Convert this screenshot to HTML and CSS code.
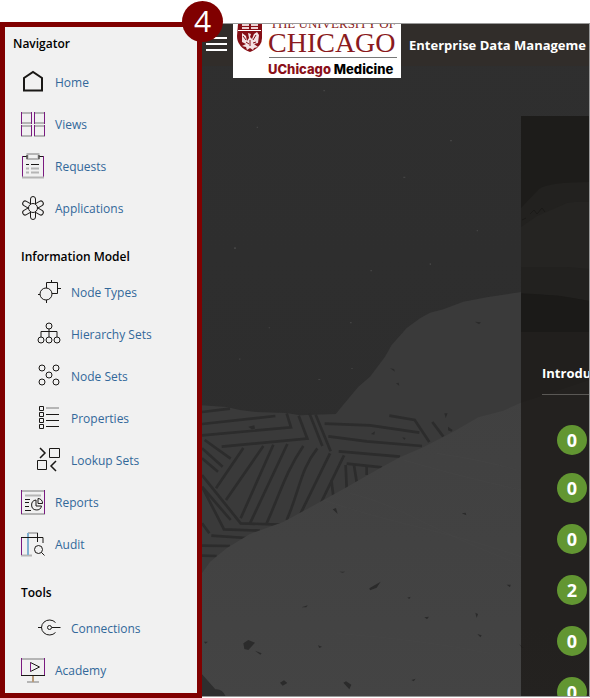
FILE: index.html
```html
<!DOCTYPE html>
<html lang="en">
<head>
<meta charset="utf-8">
<meta name="viewport" content="width=device-width, initial-scale=1">
<title>Enterprise Data Management</title>
<link rel="stylesheet" href="styles.css">
</head>
<body>
<div class="page">
  <nav class="sidebar" aria-labelledby="nav-title">
    <span class="step">4</span>
    <h2 class="nav-title" id="nav-title">Navigator</h2>
    <ul class="menu">
      <li><a href="#"><svg class="icon" viewBox="0 0 24 24"><path d="M3 20.500V8l9-6 9 6v12.500z" stroke-width="2"/></svg>Home</a></li>
      <li><a href="#"><svg class="icon" viewBox="0 0 24 24"><path class="soft" d="M0 1h11M13 1h11M0 11h11M13 11h11M0 14h11M13 14h11M0 24h11M13 24h11"/><path class="plum" d="M.5 0v12M10.500 0v12M13.500 0v12M23.500 0v12M.5 13v11M10.500 13v11M13.500 13v11M23.500 13v11"/></svg>Views</a></li>
      <li><a href="#"><svg class="icon" viewBox="0 0 24 24"><path d="M1 2.500h5M18 2.500h5"/><path class="plum" d="M1.500 2v22M22.500 2v22"/><path class="soft" d="M1 23.500h22M6.500 0h11v5h-11zM10 14.500h8M10 18.500h8M5 14.500h3M5 18.500h3"/><path d="M6 1v4M18 1v4M5 10.500h3M10 10.500h8"/></svg>Requests</a></li>
      <li><a href="#"><svg class="icon" viewBox="0 0 24 24"><circle cx="12" cy="12" r="4.500"/><g id="petals"><path id="petal" d="M9.500 8V3a2.500 2.500 0 0 1 5 0v5"/><use href="#petal" transform="rotate(60 12 12)"/><use href="#petal" transform="rotate(120 12 12)"/></g><use href="#petals" transform="rotate(180 12 12)"/></svg>Applications</a></li>
    </ul>
    <h3 class="group-title">Information Model</h3>
    <ul class="menu menu-nested">
      <li><a href="#"><svg class="icon" viewBox="0 0 24 24"><circle cx="9" cy="14" r="6"/><path d="M9.500 8V2.500h11v11H15M14.500 0v2.500M20.500 8.500H24M1 14.500h2M9.500 20v3"/></svg>Node Types</a></li>
      <li><a href="#"><svg class="icon" viewBox="0 0 24 24"><circle cx="12" cy="4" r="3"/><circle cx="4" cy="18" r="3"/><circle cx="12" cy="18" r="3"/><circle cx="20" cy="18" r="3"/><path d="M12 7v8M4 15V9.500h16V15"/></svg>Hierarchy Sets</a></li>
      <li><a href="#"><svg class="icon" viewBox="0 0 24 24"><circle cx="5" cy="4" r="3"/><circle cx="19" cy="4" r="3"/><circle cx="12" cy="11" r="3"/><circle cx="5" cy="18" r="3"/><circle cx="19" cy="18" r="3"/></svg>Node Sets</a></li>
      <li><a href="#"><svg class="icon" viewBox="0 0 24 24"><path d="M2.500 .5h4v4h-4zM2.500 6.500h4v4h-4zM2.500 12.500h4v4h-4zM2.500 18.500h4v4h-4zM9 8.500h13M9 14.500h13M9 20.500h13"/><path class="soft" d="M9 2h13"/></svg>Properties</a></li>
      <li><a href="#"><svg class="icon" viewBox="0 0 24 24"><path d="M12.500 .5h10v9h-10zM.5 12.500h9v9h-9z"/><path d="M3 0l5 5-5 5M19 13l-5 5 5 5" stroke-width="1.500"/></svg>Lookup Sets</a></li>
    </ul>
    <ul class="menu">
      <li><a href="#"><svg class="icon" viewBox="0 0 24 24"><path class="soft" d="M0 1h24M0 24h24M4 5.500h16"/><path class="plum" d="M.5 0v24M23.500 0v24"/><path d="M4 9.500h5M4 12.500h4M4 16.500h4M4 20.500h6M15 10a5 5 0 1 0 5.500 6H15zM17 8.500v5h4.500a4.500 4.500 0 0 0-4.500-5z"/></svg>Reports</a></li>
      <li><a href="#"><svg class="icon" viewBox="0 0 24 24"><path class="soft" d="M7 1h10M0 23.500h11"/><path class="plum" d="M.5 5v18"/><path class="sky" d="M7 1v22"/><path d="M0 5.500h22V11M16.500 1v9"/><circle cx="17.500" cy="17.500" r="4"/><path d="M20.500 20.500l3 3"/></svg>Audit</a></li>
    </ul>
    <h3 class="group-title">Tools</h3>
    <ul class="menu menu-nested">
      <li><a href="#"><svg class="icon" viewBox="0 0 24 24"><circle cx="12.500" cy="11.500" r="2"/><path d="M15 11.500h8.500M1 11.500h4M18.500 6.500a8 7.500 0 1 0 0 10"/></svg>Connections</a></li>
    </ul>
    <ul class="menu">
      <li><a href="#"><svg class="icon" viewBox="0 0 24 24"><path class="soft" d="M0 1h24M6 24h12"/><path class="plum" d="M.5 0v17M23.500 0v17M9.500 4.500v9"/><path d="M0 17.500h24M9.500 4.500l9 4.500-9 4.500"/><path class="tan" d="M12 18v6"/></svg>Academy</a></li>
    </ul>
  </nav>

  <main class="app">
    <svg class="scene" viewBox="36 -648 1161 2016" preserveAspectRatio="xMinYMin slice" aria-hidden="true">
      <defs>
        <linearGradient id="sky" x1="0" y1="0" x2="0" y2="1"><stop offset="0" stop-color="#2f2f2f"/><stop offset="1" stop-color="#2c2c2c"/></linearGradient>
        <linearGradient id="hill" x1="0" y1="0" x2="0" y2="1"><stop offset="0" stop-color="#404040"/><stop offset="1" stop-color="#444"/></linearGradient>
      </defs>
      <rect x="36" y="-648" width="1200" height="2100" fill="url(#sky)"/>
      <path fill="#3a3a3a" d="M36 496L110 501 150 510 200 516 290 519 330 526 437 522 505 440 540 410 585 350 605 315 650 264 690 235 720 218 760 208 820 185 890 172 993 156 1200 150V1000H36z"/>
      <g fill="none" stroke="#2c2c2c" stroke-width="8">
        <path d="M36 516L120 506M36 552L256 528M36 586L303 562 290 520M95 620L352 596 326 527M358 520L397 618M377 524L422 634M404 551L540 556 688 578M415 589L530 604 696 618M598 527L674 540 718 606M727 546L760 590M446 634L630 650M470 671L576 682"/>
        <path d="M44 600L122 656M36 625L98 680M36 655L84 695M160 624L78 745M220 618L108 780M36 705L152 850 270 854M250 614L152 835M292 612L180 850M340 618C290 690 270 760 230 850M382 625C330 690 330 750 290 840M420 640L332 820M462 646L394 786M36 740L102 868 210 872M64 887L170 894M36 917L120 918M36 947L80 948M36 850L58 880M36 740L122 840M467 675L470 745M492 675L500 725M530 678V705M424 720L430 768"/>
      </g>
      <path fill="url(#hill)" d="M36 1000L60 966 110 925 180 882 280 846 390 786 470 742 560 690 630 652 700 622 790 575 865 532 940 512 993 488 1200 420V1400H36z"/>
      <path fill="#2e2e2e" d="M36 1303L76 1348Q98 1345 108 1372H36z"/>
      <path fill="#2b2b2b" d="M160 1210l15-10 20 8-20 22-12-3zM195 1232l20 8-4 4zM538 1045l34-20-12 18-20 8zM270 1328l12-7 10 8-14 8zM460 1328l8-4 16 10-6 14zM428 808l10-4 5 18zM815 820l12-2 2 8zM600 385l12 2 3 8zM618 430l8-2 2 10zM855 245l18 2-6 6zM763 520l10 0-6 14zM774 560l14 10-4 5-10-4zM543 582l12-8-2 10zM175 560l18-4 2 10-10 2zM950 1034l12 0-2 8zM862 1182l13 4-4 6zM703 1132l14-2-6 8zM664 1320l13-4-6 8zM384 1216l12 4-8 4zM335 1102l18-6-4 6zM856 1118l8 4-4 12zM652 1073l10-3-4 7zM448 995l18 0-8 3zM637 592l10 2-4 6zM42 1205l12 0-8 6zM987 1212l14 12-6-2z"/>
      <path fill="#434343" d="M132 22h6v5h-6zM541 90h5v4h-5zM719 70h4v5h-4zM480 246h5v4h-5zM236 262h4v3h-4zM385 417h6v3h-6zM148 355h3v5h-3zM484 384h4v3h-4zM640 -190h6v4h-6zM780 -300h6v4h-6zM400 -450h5v4h-5zM200 -340h4v4h-4zM860 -30h4v4h-4z"/>
      <path fill="none" stroke="#474747" stroke-width="2" opacity=".6" d="M400 780C600 850 760 870 993 950M640 660C780 700 860 720 993 750M480 760C640 800 700 860 980 970M740 640Q880 660 980 690M440 1180Q700 1200 900 1240"/>
    </svg>

    <header class="topbar">
      <button class="menu-button" type="button" aria-label="Toggle navigator"><span></span><span></span><span></span></button>
      <svg class="logo" viewBox="0 0 168 54" role="img" aria-label="The University of Chicago, UChicago Medicine">
        <rect width="168" height="54" fill="#fff"/>
        <path fill="#860f16" d="M5 0h24v14q0 9-12 14Q4 23 4 12z"/>
        <path fill="none" stroke="#fff" d="M5 6.500h23"/>
        <path fill="none" stroke="#ecd0d2" stroke-width="2" stroke-dasharray="7 2" d="M9 1h16M9 4h16"/>
        <path fill="#f3e2e3" d="M15 9l3 1-1 3 2 2 2-5 3-2 2 3-1 8-4 1 4 3-4 1-1 2-3-2-3 2-1-3-4-1 4-2-4-2V9l4 3 1 5 2-3z"/>
        <path fill="none" stroke="#860f16" d="M10 12l3 4M23 11l-3 5M13 18l3 2M17 16v6M20 19l3-1"/>
        <text class="logo-top" x="37" y="4">THE UNIVERSITY OF</text>
        <text class="logo-name" x="35" y="28">CHICAGO</text>
        <path stroke="#777" d="M36 33.500h128"/>
        <text class="logo-unit" x="35" y="50"><tspan class="logo-accent">UChicago</tspan> Medicine</text>
      </svg>
      <h1 class="title">Enterprise Data Manageme</h1>
    </header>

    <section class="card">
      <svg class="hero" viewBox="0 0 68 216" preserveAspectRatio="xMinYMin slice" aria-hidden="true">
        <rect width="68" height="216" fill="#1d1c1a"/>
        <path fill="#22211f" d="M0 92L18 73Q28 66 68 66V185L40 180 0 177z"/>
        <path fill="#252422" d="M0 111L16 100 46 87Q56 85 68 86V153L46 151H0z"/>
        <path fill="#1b1a18" d="M0 178Q34 178 68 185V216H0z"/>
        <path fill="none" stroke="#1b1a18" d="M9 98l4-4 3 4 5-6 3 4M1 104l4-2"/>
      </svg>
      <div class="intro">
        <h2 class="intro-title">Introdu</h2>
        <ul class="counts">
          <li>0</li><li>0</li><li>0</li><li>2</li><li>0</li><li>0</li>
        </ul>
      </div>
    </section>
  </main>
</div>
</body>
</html>
```
FILE: styles.css
```css
* {
  box-sizing: border-box;
}

body,
h1,
h2,
h3,
ul {
  margin: 0;
  padding: 0;
}

ul {
  list-style: none;
}

body {
  background: #fff;
  font-family: "Open Sans", "Noto Sans", sans-serif;
  font-size: 12px;
  color: #000;
}

.page {
  display: flex;
  height: 100vh;
  padding-top: 22px;
  overflow: hidden;
}

/* Navigator */
.sidebar {
  position: relative;
  z-index: 2;
  flex: none;
  width: 202px;
  background: #f1f1f1;
  border: 5px solid #800000;
}

.step {
  position: absolute;
  top: -26px;
  right: -26px;
  width: 41px;
  height: 41px;
  border-radius: 50%;
  background: #800000;
  color: #fff;
  font-size: 30px;
  line-height: 40px;
  text-align: center;
}

.nav-title {
  padding-left: 8px;
  font-size: 12px;
  font-weight: 600;
  line-height: 34px;
}

.group-title {
  padding: 14px 0 0 16px;
  font-size: 12px;
  font-weight: 600;
  line-height: 28px;
}

.menu a {
  display: flex;
  align-items: center;
  gap: 10px;
  height: 42px;
  padding-left: 16px;
  color: #32689a;
  text-decoration: none;
}

.menu-nested a {
  padding-left: 32px;
}

.icon {
  flex: none;
  width: 24px;
  height: 24px;
  overflow: visible;
  fill: none;
  stroke: #1a1816;
}

.icon .soft {
  stroke: #b5b5b5;
  stroke-width: 2;
}

.icon .plum {
  stroke: #7a1a80;
}

.icon .sky {
  stroke: #7fb0d0;
  stroke-width: 2;
}

.icon .tan {
  stroke: #b89a78;
  stroke-width: 2;
}

/* Application */
.app {
  position: relative;
  flex: 1;
  min-width: 0;
  display: flex;
  flex-direction: column;
  margin: 1px 0 1px;
  border: 1px solid #999;
  border-left: 0;
  overflow: hidden;
}

.scene {
  position: absolute;
  inset: 0;
  width: 100%;
  height: 100%;
}

.topbar {
  position: relative;
  display: flex;
  flex: none;
  align-items: flex-start;
  height: 42px;
  padding-left: 4px;
  background: #312d2a;
}

.menu-button {
  display: grid;
  gap: 4px;
  width: 21px;
  margin: 13px 6px 0 0;
  padding: 0;
  border: 0;
  background: none;
}

.menu-button span {
  height: 2px;
  background: #fff;
}

.logo {
  flex: none;
  width: 168px;
  height: 54px;
}

.logo-top,
.logo-name {
  font-family: "Liberation Serif", serif;
  fill: #8a1a20;
}

.logo-top {
  font-size: 13px;
}

.logo-name {
  font-size: 28px;
}

.logo-unit {
  font-family: Inter, sans-serif;
  font-size: 13px;
  font-weight: 800;
}

.logo-accent {
  fill: #8a0f18;
}

.title {
  flex: 1;
  min-width: 0;
  padding-left: 8px;
  overflow: hidden;
  color: #fff;
  font-size: 13px;
  line-height: 42px;
  white-space: nowrap;
}

.card {
  position: relative;
  display: flex;
  flex: 1;
  flex-direction: column;
  min-height: 0;
  margin: 50px 0 0 319px;
  overflow: hidden;
}

.hero {
  flex: none;
  width: 100%;
  height: 216px;
}

.intro {
  flex: 1 0 auto;
  padding-left: 21px;
  background: rgba(24, 21, 18, 0.72);
  color: #fff;
}

.intro-title {
  padding-top: 20px;
  border-bottom: 1px solid #5a5855;
  font-size: 13px;
  line-height: 42px;
  white-space: nowrap;
}

.counts {
  padding: 30px 0 0 15px;
}

.counts li {
  width: 30px;
  height: 30px;
  margin-bottom: 21px;
  border-radius: 50%;
  background: #629632;
  font-size: 18px;
  font-weight: 700;
  line-height: 30px;
  text-align: center;
}

.counts li:first-child {
  margin-bottom: 18px;
}
```
